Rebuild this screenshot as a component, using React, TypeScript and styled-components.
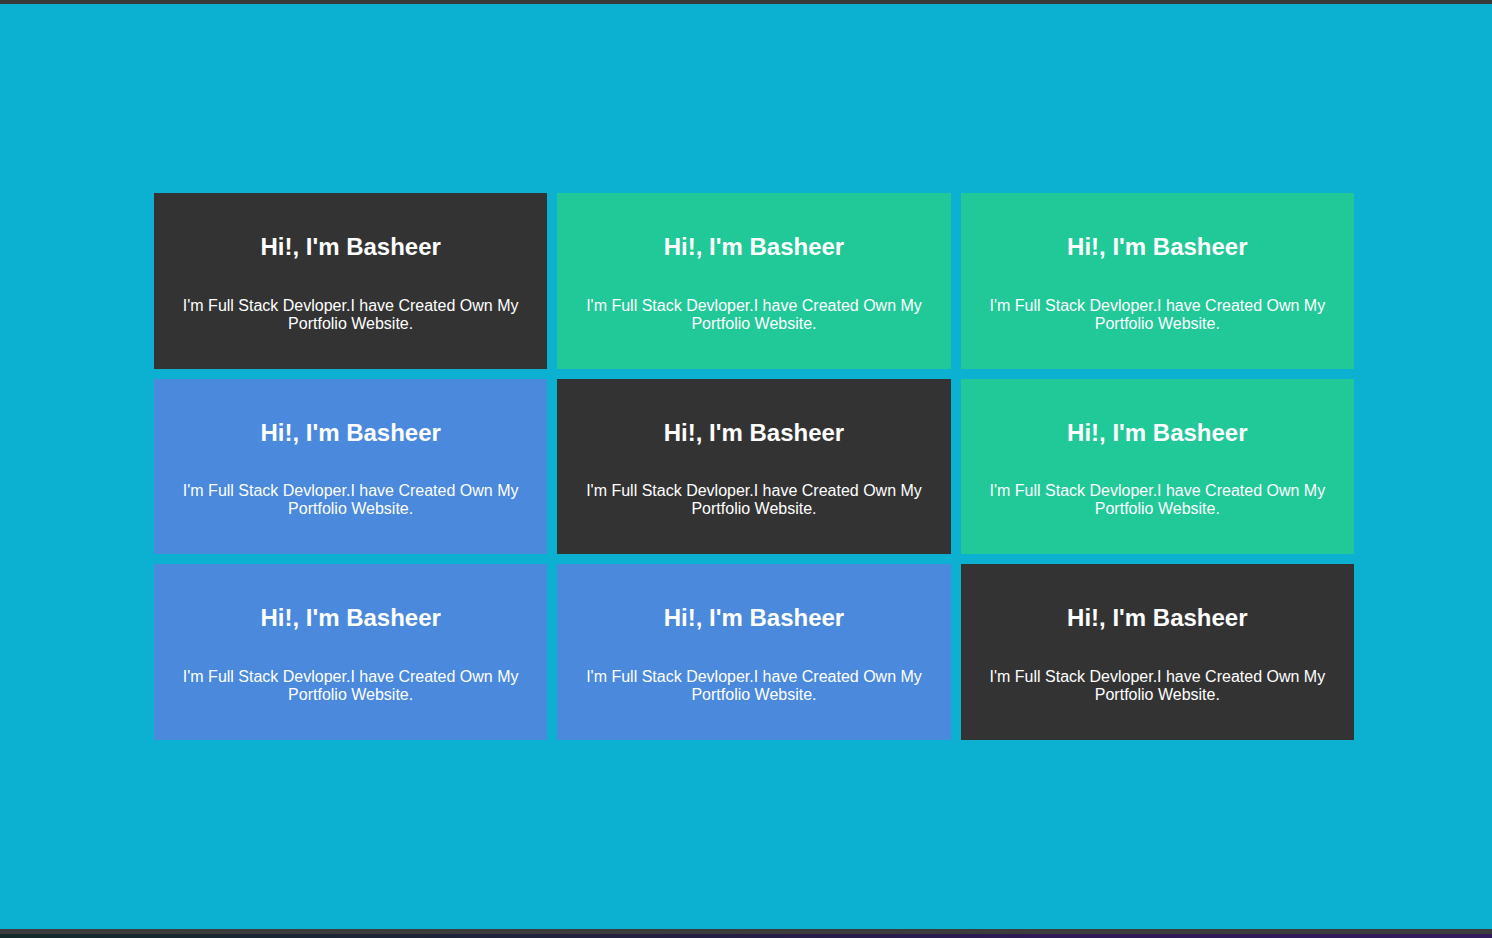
import React from "react";
import styled, { createGlobalStyle } from "styled-components";

const GlobalStyle = createGlobalStyle`
  html, body { margin: 0; padding: 0; }
  body { font-family: "Liberation Sans", Arial, sans-serif; background: #0cb1d2; }
  * { box-sizing: border-box; }
`;

const Page = styled.div`
  height: 938px;
  display: flex;
  flex-direction: column;
  background: #0cb1d2;
  overflow: hidden;
`;

const TopBar = styled.div`
  height: 4px;
  background: #3a3a3a;
  flex: none;
`;

const Main = styled.main`
  flex: 1;
  padding: 189px 0 0 154px;
`;

const Grid = styled.section`
  width: 1200px;
  display: grid;
  grid-template-columns: repeat(3, 1fr);
  grid-auto-rows: 175.67px;
  gap: 10px;
`;

type Tone = "dark" | "green" | "blue";

const toneColors: Record<Tone, string> = {
  dark: "#333333",
  green: "#21c898",
  blue: "#4a89dc",
};

const Card = styled.article<{ $tone: Tone }>`
  background: ${(p) => toneColors[p.$tone]};
  color: #ffffff;
  text-align: center;
  padding: 40px 20px 0;
  display: flex;
  flex-direction: column;
  align-items: center;
`;

const Title = styled.h2`
  margin: 0 0 35.6px;
  font-size: 24px;
  line-height: 28px;
  font-weight: 700;
`;

const Text = styled.p`
  margin: 0;
  font-size: 16px;
  line-height: 18px;
`;

const BottomBar = styled.div`
  height: 5px;
  background: #3c3c3c;
  flex: none;
`;

const BottomStrip = styled.div`
  height: 4px;
  flex: none;
  background: linear-gradient(90deg, #142a2a 0%, #23213f 40%, #2e1a55 70%, #331c5e 100%);
`;

const tones: Tone[] = ["dark", "green", "green", "blue", "dark", "green", "blue", "blue", "dark"];

export default function App() {
  return (
    <>
      <GlobalStyle />
      <Page>
        <TopBar />
        <Main>
          <Grid>
            {tones.map((t, i) => (
              <Card key={i} $tone={t}>
                <Title>Hi!, I'm Basheer</Title>
                <Text>I'm Full Stack Devloper.I have Created Own My Portfolio Website.</Text>
              </Card>
            ))}
          </Grid>
        </Main>
        <BottomBar />
        <BottomStrip />
      </Page>
    </>
  );
}
